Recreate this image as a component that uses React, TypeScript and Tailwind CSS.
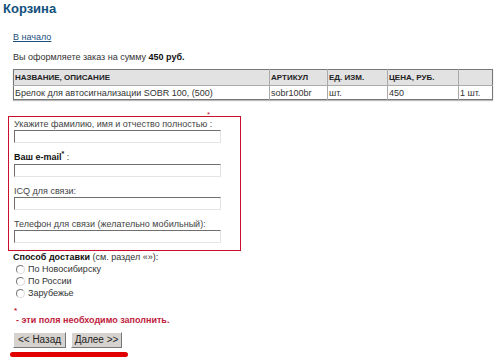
import React from 'react';

const inputCls =
  'block mt-[1px] w-[207px] h-[13px] bg-white border border-t-[#6f6f6f] border-l-[#6f6f6f] border-b-[#e4e4e4] border-r-[#e4e4e4] outline-none';

function Field({ label, bold, star }: { label: string; bold?: boolean; star?: boolean }) {
  return (
    <div className="flex flex-col">
      <span
        className={
          bold
            ? 'font-bold text-[9px] text-[#111] leading-[10px] whitespace-nowrap'
            : 'text-[9px] text-[#444] leading-[10px] whitespace-nowrap'
        }
      >
        {label}
        {star && <span className="relative top-[-4px] text-[7px]">*</span>}
        {bold ? <span className="font-normal text-[#444]"> :</span> : ''}
      </span>
      <input className={inputCls} />
    </div>
  );
}

const rows = ['По Новосибирску', 'По России', 'Зарубежье'];

export default function App() {
  return (
    <div
      className="w-[500px] h-[359px] bg-white overflow-hidden text-[#333]"
      style={{ fontFamily: '"Liberation Sans", Arial, sans-serif' }}
    >
      <h1 className="pl-[3px] pt-[1px] text-[13px] font-bold text-[#12507c] leading-[16px]">Корзина</h1>

      <div className="pl-[13px] pt-[14px] text-[9px] leading-[12px]">
        <a href="#" className="block underline text-[#1d4f80]">В начало</a>
        <p className="mt-[8px]">
          Вы оформляете заказ на сумму <b className="text-[#111] text-[9px]">450 руб.</b>
        </p>
      </div>

      <div className="ml-[13px] mt-[6px] w-[480px] shadow-[0_1px_1px_#bbb]">
        <table className="w-full border-collapse border border-[#777] text-[9px] leading-[12px]">
          <thead>
            <tr className="bg-[#e2e2e2] h-[16px] text-[8px]">
              <th className="text-left font-bold text-[#222] px-[1px] w-[256px] border-r border-[#aaa]">НАЗВАНИЕ, ОПИСАНИЕ</th>
              <th className="text-left font-bold text-[#222] px-[1px] w-[58px] border-r border-[#aaa]">АРТИКУЛ</th>
              <th className="text-left font-bold text-[#222] px-[1px] w-[60px] border-r border-[#aaa]">ЕД. ИЗМ.</th>
              <th className="text-left font-bold text-[#222] px-[1px] w-[71px] border-r border-[#aaa]">ЦЕНА, РУБ.</th>
              <th></th>
            </tr>
          </thead>
          <tbody>
            <tr className="h-[14px] border-t border-[#aaa]">
              <td className="px-[1px] border-r border-[#aaa]">Брелок для автосигнализации SOBR 100, (500)</td>
              <td className="px-[1px] border-r border-[#aaa]">sobr100br</td>
              <td className="px-[1px] border-r border-[#aaa]">шт.</td>
              <td className="px-[1px] border-r border-[#aaa]">450</td>
              <td className="px-[1px]">1 шт.</td>
            </tr>
          </tbody>
        </table>
      </div>

      <div className="relative ml-[8px] mt-[16px] w-[233px] border border-[#c8102e] pl-[5px] pt-[2px] pb-[7px] flex flex-col gap-[9px]">
        <span className="absolute left-[198px] top-[-6px] text-[8px] leading-[8px] text-[#c8102e]">*</span>
        <Field label="Укажите фамилию, имя и отчество полностью  :" />
        <Field label="Ваш e-mail" bold star />
        <Field label="ICQ для связи:" />
        <Field label="Телефон для связи (желательно мобильный):" />
      </div>

      <div className="pl-[13px] text-[9px] leading-[12px]">
        <p>
          <b className="text-[#111]">Способ доставки</b> (см. раздел «»):
        </p>
        <div className="pl-[3px] flex flex-col">
          {rows.map((r) => (
            <label key={r} className="flex items-center gap-[3px] h-[12px]">
              <span className="w-[9px] h-[9px] rounded-full border border-[#777] border-b-[#ddd] border-r-[#ddd] bg-white" />
              {r}
            </label>
          ))}
        </div>

        <div className="mt-[7px] text-[#c0213d] font-bold text-[9px]">
          <div className="pl-[1px] text-[8px] leading-[9px]">*</div>
          <p className="pl-[3px] leading-[10px]">- эти поля необходимо заполнить.</p>
        </div>

        <div className="mt-[7px] flex gap-[5px]">
          <button className="w-[53px] h-[16px] bg-[#d6d3ce] border border-t-white border-l-white border-b-[#777] border-r-[#777] text-[10px] leading-[12px] text-[#222]">
            &lt;&lt; Назад
          </button>
          <button className="w-[51px] h-[16px] bg-[#d6d3ce] border border-t-white border-l-white border-b-[#777] border-r-[#777] text-[10px] leading-[12px] text-[#222]">
            Далее &gt;&gt;
          </button>
        </div>
        <div className="mt-[4px] -ml-[3px] w-[118px] h-[5px] rounded-full bg-[#e00000]" />
      </div>
    </div>
  );
}
